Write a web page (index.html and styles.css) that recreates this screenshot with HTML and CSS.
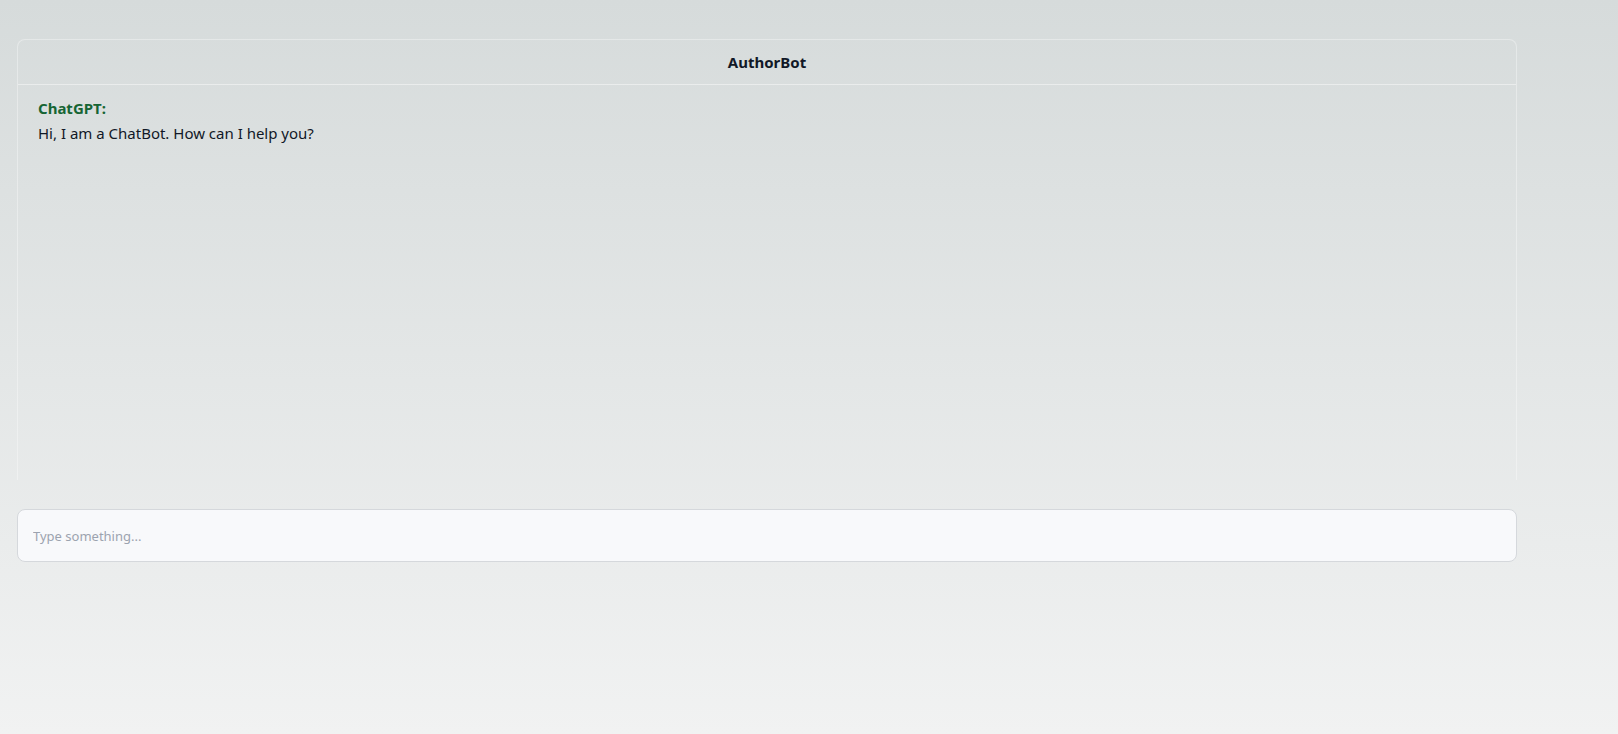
FILE: index.html
```html
<!DOCTYPE html>
<html lang="en">
<head>
<meta charset="utf-8">
<title>AuthorBot</title>
<link rel="stylesheet" href="styles.css">
</head>
<body>
<div class="page">
  <section class="chat">
    <header class="chat-header">AuthorBot</header>
    <div class="messages">
      <div class="message">
        <div class="sender">ChatGPT:</div>
        <div class="text">Hi, I am a ChatBot. How can I help you?</div>
      </div>
    </div>
  </section>
  <div class="composer">
    <input class="composer-input" type="text" placeholder="Type something...">
  </div>
</div>
</body>
</html>
```

FILE: styles.css
```css
html, body {
  margin: 0;
  padding: 0;
  height: 100%;
}
body {
  background: linear-gradient(to bottom, #d6dbdb 0%, #f1f2f2 100%);
  font-family: "Noto Sans", "Open Sans", sans-serif;
  color: #111827;
  min-height: 734px;
}
.page {
  width: 1500px;
  padding: 39px 0 0 17px;
  display: flex;
  flex-direction: column;
  gap: 29px;
}
.chat {
  height: 441px;
  border: 1px solid rgba(255, 255, 255, 0.35);
  border-bottom: none;
  border-radius: 8px 8px 0 0;
  box-sizing: border-box;
  display: flex;
  flex-direction: column;
}
.chat-header {
  height: 44px;
  border-bottom: 1px solid rgba(255, 255, 255, 0.45);
  display: flex;
  align-items: center;
  justify-content: center;
  font-weight: 700;
  font-size: 15px;
  color: #111827;
}
.messages {
  padding: 11px 20px;
}
.sender {
  font-weight: 700;
  color: #166534;
  font-size: 15px;
  line-height: 24px;
}
.text {
  font-size: 15px;
  line-height: 24px;
  margin-top: 1px;
  color: #111827;
}
.composer {
  display: flex;
}
.composer-input {
  flex: 1;
  height: 53px;
  box-sizing: border-box;
  background: #f8f9fb;
  border: 1px solid #d5d8dc;
  border-radius: 8px;
  padding: 0 15px;
  font-family: "Noto Sans", "Open Sans", sans-serif;
  font-size: 13px;
  color: #111827;
  outline: none;
}
.composer-input::placeholder {
  color: #9ca3af;
}
```
